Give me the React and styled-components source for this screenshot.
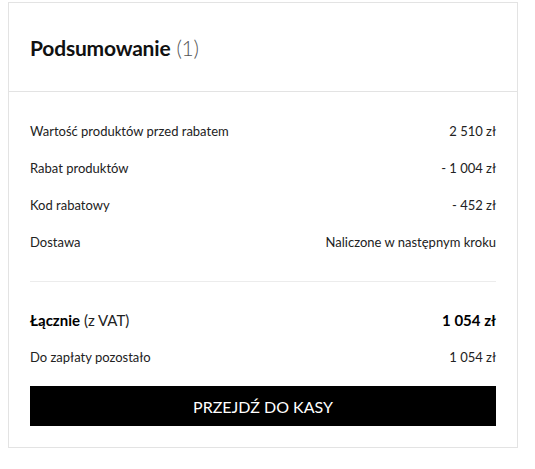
import styled, { createGlobalStyle } from "styled-components";

const GlobalStyle = createGlobalStyle`
  body {
    margin: 0;
    background: #fff;
    font-family: "Lato", "Liberation Sans", sans-serif;
    color: #222;
  }
`;

const Card = styled.section`
  width: 510px;
  margin: 2px 0 0 8px;
  border: 1px solid #e3e3e3;
  box-sizing: border-box;
`;

const Header = styled.header`
  height: 88px;
  padding: 0 21px;
  display: flex;
  align-items: center;
  border-bottom: 1px solid #e3e3e3;
`;

const Title = styled.h2`
  margin: 0;
  font-size: 21px;
  font-weight: 700;
  color: #111;
  letter-spacing: -0.2px;
`;

const Count = styled.span`
  font-weight: 300;
  color: #555;
  margin-left: 6px;
`;

const Body = styled.div`
  padding: 20px 21px 21px;
`;

const Row = styled.div`
  display: flex;
  justify-content: space-between;
  align-items: center;
  height: ${(p) => (p.$big ? "36px" : "37px")};
  font-size: ${(p) => (p.$big ? "15px" : "13px")};
  color: #222;
`;

const Strong = styled.strong`
  font-weight: 700;
  color: #000;
`;

const Divider = styled.hr`
  border: 0;
  border-top: 1px solid #ececec;
  margin: 21px 0 20px;
`;

const Button = styled.button`
  display: block;
  width: 100%;
  height: 40px;
  margin-top: 11px;
  border: 0;
  background: #000;
  color: #fff;
  font-family: "Lato", "Liberation Sans", sans-serif;
  font-size: 16px;
  font-weight: 400;
  text-transform: uppercase;
  cursor: pointer;
`;

const rows = [
  ["Wartość produktów przed rabatem", "2 510 zł"],
  ["Rabat produktów", "- 1 004 zł"],
  ["Kod rabatowy", "- 452 zł"],
  ["Dostawa", "Naliczone w następnym kroku"],
];

export default function App() {
  return (
    <>
      <GlobalStyle />
      <Card>
        <Header>
          <Title>
            Podsumowanie<Count>(1)</Count>
          </Title>
        </Header>
        <Body>
          {rows.map(([label, value]) => (
            <Row key={label}>
              <span>{label}</span>
              <span>{value}</span>
            </Row>
          ))}
          <Divider />
          <Row $big>
            <span>
              <Strong>Łącznie</Strong> (z VAT)
            </span>
            <Strong>1 054 zł</Strong>
          </Row>
          <Row>
            <span>Do zapłaty pozostało</span>
            <span>1 054 zł</span>
          </Row>
          <Button>Przejdź do kasy</Button>
        </Body>
      </Card>
    </>
  );
}
